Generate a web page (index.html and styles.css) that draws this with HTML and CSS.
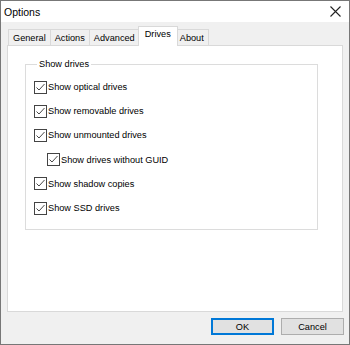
FILE: index.html
```html
<!DOCTYPE html>
<html lang="en">

<head>
    <meta charset="UTF-8">
    <title>Options</title>
    <link rel="stylesheet" href="styles.css">
</head>

<body>
    <div class="window">
        <!-- 標題列 -->
        <div class="titlebar">
            <span class="title">Options</span>
            <svg class="close" width="11" height="11" viewBox="0 0 11 11">
                <path d="M0.5 0.5 L10.5 10.5 M10.5 0.5 L0.5 10.5" stroke="#222" stroke-width="1.1" fill="none"/>
            </svg>
        </div>

        <div class="content">
            <!-- 分頁標籤 -->
            <div class="tabs">
                <div class="tab">General</div>
                <div class="tab">Actions</div>
                <div class="tab">Advanced</div>
                <div class="tab active">Drives</div>
                <div class="tab">About</div>
            </div>

            <div class="panel">
                <fieldset class="group">
                    <legend>Show drives</legend>
                    <div class="row"><span class="check"></span>Show optical drives</div>
                    <div class="row"><span class="check"></span>Show removable drives</div>
                    <div class="row"><span class="check"></span>Show unmounted drives</div>
                    <div class="row sub"><span class="check"></span>Show drives without GUID</div>
                    <div class="row"><span class="check"></span>Show shadow copies</div>
                    <div class="row"><span class="check"></span>Show SSD drives</div>
                </fieldset>
            </div>
        </div>

        <!-- 底部按鈕 -->
        <div class="footer">
            <button class="btn default">OK</button>
            <button class="btn">Cancel</button>
        </div>
    </div>
</body>

</html>
```

FILE: styles.css
```css
/* 基本樣式 */
body {
    margin: 0;
    font-family: "Liberation Sans", Arial, sans-serif;
    font-size: 9.2px;
    color: #000;
}

.window {
    width: 350px;
    height: 345px;
    box-sizing: border-box;
    border: 1px solid #777;
    background: #f0f0f0;
    display: flex;
    flex-direction: column;
}

.titlebar {
    height: 21px;
    background: #fff;
    display: flex;
    align-items: center;
    justify-content: space-between;
    padding: 0 8px 0 3px;
}

.title {
    font-size: 10.5px;
}

.content {
    flex: 1;
    display: flex;
    flex-direction: column;
    padding: 5px 6px 0 6px;
}

/* 分頁標籤 */
.tabs {
    display: flex;
    align-items: flex-end;
    height: 19px;
    padding-left: 1px;
    position: relative;
    z-index: 1;
    margin-bottom: -1px;
}

.tab {
    height: 17px;
    line-height: 16px;
    padding: 0 4px;
    box-sizing: border-box;
    border: 1px solid #d9d9d9;
    border-left: none;
    background: #f0f0f0;
}

.tab:first-child {
    border-left: 1px solid #d9d9d9;
}

.tab.active {
    height: 20px;
    line-height: 15px;
    margin: 0 -2px;
    padding: 0 6px;
    background: #fff;
    border-left: 1px solid #d9d9d9;
    border-bottom: none;
    position: relative;
}

.panel {
    flex: 1;
    background: #fff;
    border: 1px solid #d9d9d9;
    padding: 13px 24px 0 17px;
}

/* 群組框 */
.group {
    margin: 0;
    height: 164px;
    border: 1px solid #dcdcdc;
    padding: 5px 0 0 8px;
}

.group legend {
    padding: 0 2px;
    margin-left: 3px;
    line-height: 11px;
}

.row {
    height: 24.2px;
    display: flex;
    align-items: center;
}

.row.sub {
    padding-left: 13px;
}

.check {
    width: 13px;
    height: 13px;
    box-sizing: border-box;
    border: 1px solid #444;
    margin-right: 1px;
    background: #fff url("data:image/svg+xml;utf8,<svg xmlns='http://www.w3.org/2000/svg' width='11' height='11'><path d='M1.5 5.5 L4 8 L9.5 2' stroke='%23333' stroke-width='0.9' fill='none'/></svg>") no-repeat center;
}

/* 按鈕 */
.footer {
    display: flex;
    justify-content: flex-end;
    gap: 7px;
    padding: 6px 5px 9px 0;
}

.btn {
    width: 63px;
    height: 17px;
    font-family: inherit;
    font-size: 9.2px;
    background: #e1e1e1;
    border: 1px solid #adadad;
    padding: 0;
}

.btn.default {
    border: 2px solid #0078d7;
}
```
